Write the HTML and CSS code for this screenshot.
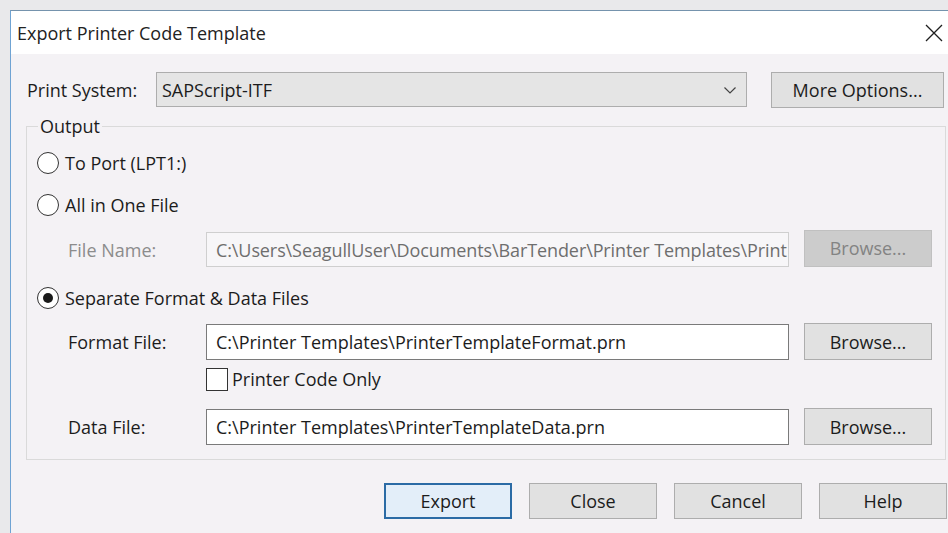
FILE: index.html
```html
<!DOCTYPE html>
<html lang="en">
<head>
<meta charset="utf-8">
<title>Export Printer Code Template</title>
<link rel="stylesheet" href="styles.css">
</head>
<body>
<div class="window">
  <div class="titlebar">
    <span class="title">Export Printer Code Template</span>
    <span class="close" aria-label="Close">
      <svg width="18" height="18" viewBox="0 0 18 18"><path d="M1 1 L17 17 M17 1 L1 17" stroke="#1f1f1f" stroke-width="1.3" fill="none"/></svg>
    </span>
  </div>
  <div class="content">
    <div class="system-row">
      <span class="system-label">Print System:</span>
      <div class="combo">
        <span>SAPScript-ITF</span>
        <svg class="chevron" width="12" height="7" viewBox="0 0 12 7"><path d="M0.5 0.5 L6 6 L11.5 0.5" stroke="#444" stroke-width="1.2" fill="none"/></svg>
      </div>
      <button class="btn more">More Options...</button>
    </div>

    <fieldset class="output">
      <legend>Output</legend>

      <div class="radio-row first">
        <span class="radio"></span><span>To Port (LPT1:)</span>
      </div>

      <div class="radio-row gap-12">
        <span class="radio"></span><span>All in One File</span>
      </div>

      <div class="file-row gap-11 disabled">
        <span class="file-label">File Name:</span>
        <div class="field field-disabled"><span class="field-text">C:\Users\SeagullUser\Documents\BarTender\Printer Templates\Print</span></div>
        <button class="btn browse btn-disabled">Browse...</button>
      </div>

      <div class="radio-row gap-15">
        <span class="radio checked"></span><span>Separate Format &amp; Data Files</span>
      </div>

      <div class="file-row gap-10">
        <span class="file-label">Format File:</span>
        <div class="field">C:\Printer Templates\PrinterTemplateFormat.prn</div>
        <button class="btn browse">Browse...</button>
      </div>

      <div class="check-row">
        <span class="checkbox"></span><span>Printer Code Only</span>
      </div>

      <div class="file-row gap-17">
        <span class="file-label">Data File:</span>
        <div class="field">C:\Printer Templates\PrinterTemplateData.prn</div>
        <button class="btn browse">Browse...</button>
      </div>
    </fieldset>

    <div class="actions">
      <button class="btn action default">Export</button>
      <button class="btn action">Close</button>
      <button class="btn action">Cancel</button>
      <button class="btn action">Help</button>
    </div>
  </div>
</div>
</body>
</html>
```

FILE: styles.css
```css
html, body {
  margin: 0;
  padding: 0;
  overflow: hidden;
}

body {
  background: #e9e9eb;
  font-family: "Open Sans", "Noto Sans", "Liberation Sans", sans-serif;
  font-size: 18px;
  line-height: 24px;
  color: #1c1c1c;
  height: 533px;
}

/* dialog frame */
.window {
  margin: 10px 0 0 10px;
  border-top: 1px solid #7593ad;
  border-left: 1px solid #6fa3d3;
  height: 523px;
  background: #f4f2f5;
}

.titlebar {
  height: 43px;
  background: #ffffff;
  display: flex;
  align-items: center;
  justify-content: space-between;
  padding: 0 5px 0 6px;
}

.title {
  color: #222;
}

.close {
  display: flex;
  width: 18px;
  height: 18px;
  margin-top: 1px;
}

.content {
  padding: 17px 0 0 15px;
}

/* print system row */
.system-row {
  display: flex;
  align-items: center;
  height: 37px;
}

.system-label {
  width: 130px;
  padding-left: 1px;
  box-sizing: border-box;
}

.combo {
  width: 591px;
  height: 35px;
  box-sizing: border-box;
  background: #e5e5e5;
  border: 1px solid #adadad;
  display: flex;
  align-items: center;
  justify-content: space-between;
  padding: 0 10px 0 5px;
  margin-right: 24px;
}

.chevron {
  margin-top: 1px;
}

.btn {
  font: inherit;
  color: #1c1c1c;
  background: #e1e1e1;
  border: 1px solid #adadad;
  box-sizing: border-box;
  padding: 0;
  margin: 0;
  height: 37px;
}

.more {
  width: 173px;
  height: 36px;
}

/* output group */
.output {
  width: 920px;
  box-sizing: border-box;
  margin: 6px 0 0 0;
  padding: 10px 0 14px 0;
  border: 1px solid #dadada;
  min-inline-size: 0;
}

.output legend {
  margin-left: 11px;
  padding: 0 2px;
  line-height: 24px;
}

.radio-row {
  display: flex;
  align-items: center;
  height: 30px;
  padding-left: 10px;
}

.radio {
  width: 22px;
  height: 22px;
  box-sizing: border-box;
  border: 1.6px solid #333;
  border-radius: 50%;
  background: #ffffff;
  margin-right: 6px;
  display: flex;
  align-items: center;
  justify-content: center;
}

.radio.checked::after {
  content: "";
  width: 10px;
  height: 10px;
  border-radius: 50%;
  background: #1a1a1a;
}

.gap-10 { margin-top: 10px; }
.gap-11 { margin-top: 11px; }
.gap-12 { margin-top: 12px; }
.gap-15 { margin-top: 15px; }
.gap-17 { margin-top: 17px; }

.file-row {
  display: flex;
  align-items: center;
  height: 37px;
  padding-left: 41px;
}

.file-label {
  width: 138px;
}

.field {
  width: 583px;
  height: 36px;
  box-sizing: border-box;
  background: #ffffff;
  border: 1px solid #7a7a7a;
  padding: 0 9px;
  display: flex;
  align-items: center;
  white-space: nowrap;
  overflow: hidden;
  margin-right: 15px;
}

.disabled .file-label {
  color: #8c8c8c;
}

.field-disabled {
  height: 35px;
  background: #f7f6f8;
  border-color: #cfcfcf;
  color: #6e6e6e;
  padding: 0 0 0 9px;
}

.field-text {
  letter-spacing: -0.1px;
}

.browse {
  width: 128px;
}

.btn-disabled {
  background: #cccccc;
  border-color: #c0c0c0;
  color: #838383;
  margin-top: -3px;
}

.check-row {
  display: flex;
  align-items: center;
  height: 24px;
  margin-top: 7px;
  padding-left: 179px;
}

.checkbox {
  width: 22px;
  height: 23px;
  box-sizing: border-box;
  border: 1px solid #333;
  background: #ffffff;
  margin-right: 4px;
}

/* dialog buttons */
.actions {
  display: flex;
  justify-content: flex-end;
  gap: 17px;
  width: 921px;
  margin-top: 23px;
}

.action {
  width: 128px;
  height: 36px;
}

.default {
  background: #e3eef9;
  border: 2px solid #2b6ba5;
}
```
